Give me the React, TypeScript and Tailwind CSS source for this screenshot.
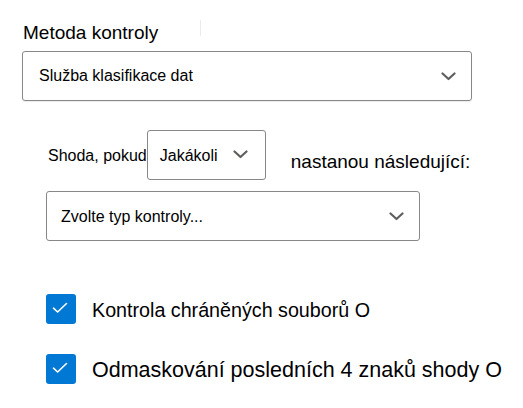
function Chevron() {
    return (
        <svg width="15" height="9" viewBox="0 0 15 9" className="shrink-0">
            <path d="M1.5 1.5 L7.5 7 L13.5 1.5" fill="none" stroke="#605e5c" strokeWidth="2.2" strokeLinecap="round" strokeLinejoin="round" />
        </svg>
    );
}

function Check() {
    return (
        <div className="w-[30px] h-[30px] rounded-[3px] bg-[#0078d4] flex items-center justify-center shrink-0">
            <svg width="16" height="12" viewBox="0 0 16 12" className="-mt-[3px] -ml-[3px]">
                <path d="M1.5 6.2 L5.6 10 L14.5 1.5" fill="none" stroke="#ffffff" strokeWidth="1.6" strokeLinecap="round" strokeLinejoin="round" />
            </svg>
        </div>
    );
}

export default function App() {
    return (
        <div className="w-[523px] h-[408px] bg-white text-black font-['Liberation_Sans',Arial,sans-serif] overflow-hidden">
            <div className="pl-[22px] pt-[21px]">
                {/* Metoda kontroly */}
                <div className="flex items-start h-[24px]">
                    <span className="ml-px text-[19px] leading-[24px]">Metoda kontroly</span>
                    <span className="ml-[42px] mt-[-1px] w-px h-[16px] bg-[#ececec]" />
                </div>
                <div className="mt-[6px] w-[450px] h-[50px] border border-[#8a8886] rounded-[3px] flex items-center justify-between pl-[16px] pr-[15px] shadow-[0_1px_1px_rgba(0,0,0,0.08)]">
                    <span className="text-[16px] leading-[20px]">Služba klasifikace dat</span>
                    <Chevron />
                </div>

                {/* Shoda */}
                <div className="ml-[24px] mt-[29px]">
                    <div className="flex items-start">
                        <span className="ml-[2px] text-[16px] leading-[20px] mt-[16px]">Shoda, pokud</span>
                        <div className="w-[119px] h-[50px] border border-[#8a8886] rounded-[3px] flex items-start justify-between pl-[12px] pr-[17px]">
                            <span className="text-[16px] leading-[20px] mt-[15px]">Jakákoli</span>
                            <span className="mt-[19px]"><Chevron /></span>
                        </div>
                        <span className="ml-[25px] mt-[20px] text-[19px] leading-[24px]">nastanou následující:</span>
                    </div>
                    <div className="mt-[11px] w-[374px] h-[50px] border border-[#8a8886] rounded-[3px] flex items-center justify-between pl-[14px] pr-[15px]">
                        <span className="text-[16px] leading-[20px] mt-[2px]">Zvolte typ kontroly...</span>
                        <Chevron />
                    </div>

                    {/* Checkboxes */}
                    <div className="mt-[53px] flex flex-col gap-[30px]">
                        <div className="flex items-center gap-[16px]">
                            <Check />
                            <span className="text-[19.7px] leading-[24px] mt-[2px]">Kontrola chráněných souborů O</span>
                        </div>
                        <div className="flex items-center gap-[16px]">
                            <Check />
                            <span className="text-[21.5px] leading-[26px] mt-[2px]">Odmaskování posledních 4 znaků shody O</span>
                        </div>
                    </div>
                </div>
            </div>
        </div>
    );
}
